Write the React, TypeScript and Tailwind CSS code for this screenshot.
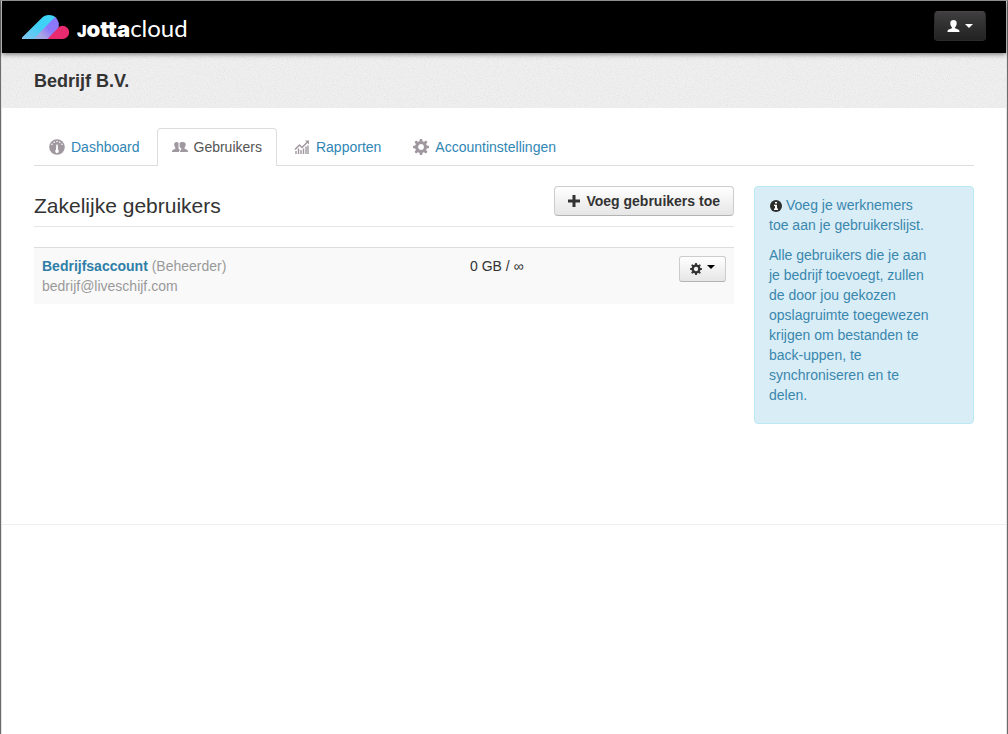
import React from "react";

const Logo = () => (
  <svg width="47" height="25" viewBox="0 0 47 25" aria-hidden="true">
    <defs>
      <linearGradient id="cyan" x1="0" y1="1" x2="1" y2="0">
        <stop offset="0" stopColor="#86c4ee" />
        <stop offset="0.5" stopColor="#3fd0f6" />
        <stop offset="1" stopColor="#3fd6fa" />
      </linearGradient>
      <linearGradient id="violet" gradientUnits="userSpaceOnUse" x1="12" y1="24" x2="34" y2="4">
        <stop offset="0" stopColor="#8fb8ea" />
        <stop offset="0.3" stopColor="#a9a2e4" />
        <stop offset="0.6" stopColor="#8c78fb" />
      </linearGradient>
    </defs>
    <path d="M0 24 V22.500 L19.500 3.200 A10.500 10.500 0 0 1 34.500 3.200 L33 7 L13 24 Z" fill="url(#cyan)" />
    <path d="M11.500 24 L33 2 A10.500 10.500 0 0 1 35.500 15.500 L27 24 Z" fill="url(#violet)" />
    <path d="M25.500 24 L36 13 Q38 10.700 40.500 10.700 A6.650 6.650 0 0 1 40.500 24 Z" fill="#e92a6f" />
  </svg>
);

const UserIcon = () => (
  <svg width="13" height="12" viewBox="0 0 13 12" fill="#fff" aria-hidden="true">
    <path d="M6.500 0C4.500 0 3.300 1.200 3.300 3.200C3.300 5 3.900 6.300 4.900 7.200V8.200L1.200 9.800Q.5 10.200.5 12H12.500Q12.500 10.200 11.800 9.800L8.100 8.200V7.200C9.100 6.300 9.700 5 9.700 3.200C9.700 1.200 8.500 0 6.500 0Z" />
  </svg>
);

const Caret = ({ color }: { color: string }) => (
  <svg width="8" height="4" viewBox="0 0 8 4" fill={color} aria-hidden="true">
    <path d="M0 0H8L4 4Z" />
  </svg>
);

const DashboardIcon = () => (
  <svg width="16" height="16" viewBox="0 0 16 16" aria-hidden="true">
    <circle cx="8" cy="8" r="7.800" fill="#9f989f" />
    <path d="M7.300 5.500h1.400l.4 5.300a1.800 1.800 0 1 1-2.200 0z" fill="#fff" />
    <g fill="#fff">
      <circle cx="3" cy="5.200" r="0.800" />
      <circle cx="5.200" cy="3.200" r="0.800" />
      <circle cx="8" cy="2.500" r="0.800" />
      <circle cx="10.800" cy="3.200" r="0.800" />
      <circle cx="13" cy="5.200" r="0.800" />
    </g>
  </svg>
);

const UsersIcon = () => (
  <svg width="16" height="16" viewBox="0 0 16 16" fill="#9f989f" aria-hidden="true">
    <path d="M4.500 3C3 3 2.200 3.900 2.200 5.600C2.300 7.100 2.700 7.900 3.300 8.500V9.700L.6 11Q0 11.400 0 13H7Q7 11.400 8 10.800L6.500 9.700V3.500Q5.600 3 4.500 3Z" />
    <path d="M11 3C9.300 3 7.600 3.200 7.600 4.500V8L9.400 9.500Q9.500 10.700 8.800 11Q8 11.400 8 13H16Q16 11.400 15.400 11L12.600 9.700V8.500C13.200 7.900 13.600 7.100 13.700 5.600C13.800 4 12.700 3 11 3Z" />
  </svg>
);

const ReportIcon = () => (
  <svg width="16" height="16" viewBox="0 0 16 16" fill="none" stroke="#9f989f" aria-hidden="true">
    <path d="M1 10.500 5.500 6l2.500 2.500L13.500 3" strokeWidth="1.500" />
    <path d="M11 1.500h4v4z" fill="#9f989f" stroke="none" />
    <path d="M2 15v-3M4.500 15V9.500M7 15v-4M9.500 15V9.500M12 15V7.500M14 15V6.500" strokeWidth="1.400" />
  </svg>
);

const TEETH = [0, 45, 90, 135, 180, 225, 270, 315];

const Gear = ({ size, color }: { size: number; color: string }) => (
  <svg width={size} height={size} viewBox="0 0 16 16" aria-hidden="true">
    <circle cx="8" cy="8" r="4.400" fill="none" stroke={color} strokeWidth="3" />
    {TEETH.map((a) => (
      <path key={a} d="M6.300 3 6.900 0h2.200l.6 3z" fill={color} transform={`rotate(${a} 8 8)`} />
    ))}
  </svg>
);

const PlusIcon = () => (
  <svg width="12" height="12" viewBox="0 0 12 12" fill="#333" aria-hidden="true">
    <path d="M4.500 0h3v4.500H12v3H7.500V12h-3V7.500H0v-3h4.500z" />
  </svg>
);

const InfoIcon = () => (
  <svg width="12" height="12" viewBox="0 0 12 12" className="mr-1 ml-px inline-block" aria-hidden="true">
    <circle cx="6" cy="6" r="6" fill="#2d2d2d" />
    <path d="M5 2h2v1.500H5zM4 4.700h3V8.500h1V10H4V8.500h1V6H4z" fill="#fff" />
  </svg>
);

const tabs = [
  { label: "Dashboard", icon: <DashboardIcon />, active: false },
  { label: "Gebruikers", icon: <UsersIcon />, active: true },
  { label: "Rapporten", icon: <ReportIcon />, active: false },
  { label: "Accountinstellingen", icon: <Gear size={16} color="#9f989f" />, active: false },
];

export default function App() {
  return (
    <div className="flex min-h-screen flex-col border-x border-t border-x-[#6f6b6b] border-t-[#a8a8a8] bg-white font-['Liberation_Sans',Arial,sans-serif] text-sm leading-5 text-[#333]">
      <div className="flex-1 border-x border-[#e4e4e4]">
        <header className="relative z-10 flex h-[52px] items-center justify-between bg-black px-5 shadow-[0_1px_5px_rgba(0,0,0,0.55)]">
          <a href="#" aria-label="Jottacloud" className="flex items-center gap-2 pt-1 text-white">
            <span className="pb-1">
              <Logo />
            </span>
            <span className="flex items-baseline leading-6">
              <span className="font-[Inter,sans-serif] text-base leading-6 font-black">J</span>
              <span className="font-[Inter,sans-serif] text-[22px] leading-6 font-black">otta</span>
              <span className="font-[Lato,sans-serif] text-2xl leading-6">cloud</span>
            </span>
          </a>
          <button
            type="button"
            aria-label="Account"
            className="mb-0.5 flex h-[30px] w-[52px] items-center justify-center gap-[5px] rounded border border-[#2b2b2b] border-t-[#4a4644] bg-linear-to-b from-[#403e40] to-[#222]"
          >
            <UserIcon />
            <Caret color="#fff" />
          </button>
        </header>

        <div className="relative h-[55px] bg-[#efefef]">
          <svg className="absolute inset-0 h-full w-full opacity-10" aria-hidden="true">
            <filter id="grain">
              <feTurbulence type="fractalNoise" baseFrequency="0.9" numOctaves="3" />
              <feColorMatrix values="1.500 0 0 0 0  1.500 0 0 0 0  1.500 0 0 0 0  0 0 0 0 1" />
            </filter>
            <rect width="100%" height="100%" filter="url(#grain)" />
          </svg>
          <div className="relative px-8 pt-[18px]">
            <h1 className="text-lg leading-5 font-bold">Bedrijf B.V.</h1>
          </div>
        </div>

        <main className="min-h-[417px] border-b border-[#eee] px-8 pt-5">
          <nav className="flex gap-0.5 border-b border-[#ddd]">
            {tabs.map((t) => (
              <a
                key={t.label}
                href="#"
                aria-current={t.active ? "page" : undefined}
                className={
                  t.active
                    ? "-mb-px flex items-center gap-1.5 rounded-t border border-b-0 border-[#ddd] bg-white px-3.5 pt-2 pb-[9px] text-[#555]"
                    : "flex items-center gap-1.5 px-[15px] pt-[9px] pb-2 text-[#2f86b5]"
                }
              >
                {t.icon}
                {t.label}
              </a>
            ))}
          </nav>

          <div className="mt-5 flex items-start gap-5">
            <section className="min-w-0 flex-1">
              <div className="flex items-start justify-between border-b border-[#e5e5e5]">
                <h2 className="text-[21px] leading-10">Zakelijke gebruikers</h2>
                <button
                  type="button"
                  className="flex h-[30px] items-center gap-1.5 rounded border border-[#ccc] border-b-[#b3b3b3] bg-linear-to-b from-white to-[#e6e6e6] px-[13px] font-bold"
                >
                  <PlusIcon />
                  Voeg gebruikers toe
                </button>
              </div>

              <table className="mt-5 w-full border-t border-[#ddd]">
                <tbody>
                  <tr className="bg-[#f9f9f9] align-top">
                    <td className="w-[428px] p-2">
                      <a href="#" className="font-bold text-[#2f7ea8]">Bedrijfsaccount</a>{" "}
                      <span className="text-[#999]">(Beheerder)</span>
                      <div className="text-[#999]">bedrijf@liveschijf.com</div>
                    </td>
                    <td className="p-2">0 GB / ∞</td>
                    <td className="p-2">
                      <button
                        type="button"
                        aria-label="Acties"
                        className="ml-auto flex h-[26px] w-[47px] items-center justify-center gap-[5px] rounded-[3px] border border-[#ccc] border-b-[#b3b3b3] bg-linear-to-b from-white to-[#e6e6e6]"
                      >
                        <Gear size={12} color="#333" />
                        <span className="pb-1">
                          <Caret color="#000" />
                        </span>
                      </button>
                    </td>
                  </tr>
                </tbody>
              </table>
            </section>

            <aside className="w-[220px] rounded border border-[#bce8f1] bg-[#d9edf7] py-2 pr-10 pl-3.5 text-[#3a87ad]">
              <p className="mb-2.5">
                <InfoIcon />
                Voeg je werknemers toe aan je gebruikerslijst.
              </p>
              <p className="mb-2.5">
                Alle gebruikers die je aan je bedrijf toevoegt, zullen de door jou gekozen opslagruimte toegewezen
                krijgen om bestanden te back-uppen, te synchroniseren en te delen.
              </p>
            </aside>
          </div>
        </main>
      </div>
    </div>
  );
}
